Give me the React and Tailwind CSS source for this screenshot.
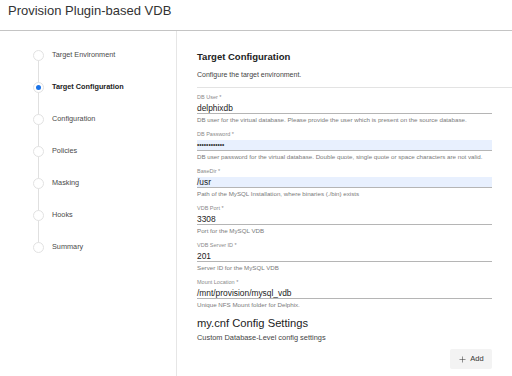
import React from 'react';
import { Plus } from 'lucide-react';

const steps = [
  { label: 'Target Environment' },
  { label: 'Target Configuration', active: true },
  { label: 'Configuration' },
  { label: 'Policies' },
  { label: 'Masking' },
  { label: 'Hooks' },
  { label: 'Summary' },
];

const fields = [
  {
    label: 'DB User *',
    value: 'delphixdb',
    help: 'DB user for the virtual database. Please provide the user which is present on the source database.',
  },
  {
    label: 'DB Password *',
    value: '••••••••••••',
    password: true,
    filled: true,
    help: 'DB user password for the virtual database. Double quote, single quote or space characters are not valid.',
  },
  {
    label: 'BaseDir *',
    value: '/usr',
    filled: true,
    help: 'Path of the MySQL Installation, where binaries (./bin) exists',
  },
  { label: 'VDB Port *', value: '3308', help: 'Port for the MySQL VDB' },
  { label: 'VDB Server ID *', value: '201', help: 'Server ID for the MySQL VDB' },
  {
    label: 'Mount Location *',
    value: '/mnt/provision/mysql_vdb',
    help: 'Unique NFS Mount folder for Delphix.',
  },
];

const Field = ({ field }) => (
  <div className="flex flex-col">
    <div className="h-[8px] text-[5.5px] leading-[8px] text-[#8a8a8a]">{field.label}</div>
    <div
      className={`mt-[2px] flex h-[11px] items-center border-b border-[#b5b5b5] ${
        field.filled ? 'bg-[#e8f0fe]' : ''
      }`}
    >
      <span
        className={
          field.password
            ? 'text-[6.5px] leading-[10px] text-[#333]'
            : 'text-[8.4px] leading-[10px] text-[#222]'
        }
      >
        {field.value}
      </span>
    </div>
    <div className="h-[12px] text-[6.2px] leading-[12px] text-[#7a7a7a] whitespace-nowrap">{field.help}</div>
  </div>
);

const StepList = () => (
  <div className="relative pt-[8px]">
    {/* connector */}
    <div className="absolute left-[38px] top-[24px] h-[193px] w-px bg-[#e0e0e0]" />
    {steps.map((step) => (
      <div key={step.label} className="relative flex h-[32px] items-center pl-[33px]">
        <div className="flex h-[11px] w-[11px] items-center justify-center rounded-full border border-[#e2e2e2] bg-white">
          {step.active && <div className="h-[5px] w-[5px] rounded-full bg-[#1a73e8]" />}
        </div>
        <span
          className={`ml-[8px] text-[7.3px] ${
            step.active ? 'font-bold text-[#222]' : 'text-[#4a4a4a]'
          }`}
        >
          {step.label}
        </span>
      </div>
    ))}
  </div>
);

const App = () => {
  return (
    <div
      className="flex h-[376px] w-[512px] flex-col overflow-hidden bg-white"
      style={{ fontFamily: '"Liberation Sans", Arial, sans-serif' }}
    >
      {/* Header */}
      <div className="h-[31px] shrink-0 border-b border-[#c4c4c4] px-[8px]">
        <h1 className="text-[13px] leading-[21px] text-[#333]">Provision Plugin-based VDB</h1>
      </div>

      <div className="flex min-h-0 flex-1">
        {/* Steps */}
        <div className="w-[177px] shrink-0 border-r border-[#e6e6e6]">
          <StepList />
        </div>

        {/* Form */}
        <div className="flex-1 pl-[20px] pt-[20px]">
          <h2 className="text-[9.5px] font-bold leading-[12px] text-[#222]">Target Configuration</h2>
          <p className="mt-[7px] border-b border-[#e3e3e3] pb-[7px] text-[7px] leading-[10px] text-[#444]">
            Configure the target environment.
          </p>

          <div className="mr-[20px] mt-[5px] flex flex-col gap-[4px]">
            {fields.map((f) => (
              <Field key={f.label} field={f} />
            ))}
          </div>

          <div className="mr-[20px] mt-[5px]">
            <h3 className="text-[11.2px] leading-[14px] text-[#222]">my.cnf Config Settings</h3>
            <p className="mt-[3px] text-[7.4px] leading-[10px] text-[#444]">
              Custom Database-Level config settings
            </p>
            <div className="mt-[6px] flex justify-end">
              <button className="flex h-[20px] w-[42px] items-center justify-center gap-[3px] rounded-[2px] bg-[#f3f3f3] text-[7.5px] text-[#333]">
                <Plus size={9} strokeWidth={1.4} />
                Add
              </button>
            </div>
          </div>
        </div>
      </div>
    </div>
  );
};

export default App;
